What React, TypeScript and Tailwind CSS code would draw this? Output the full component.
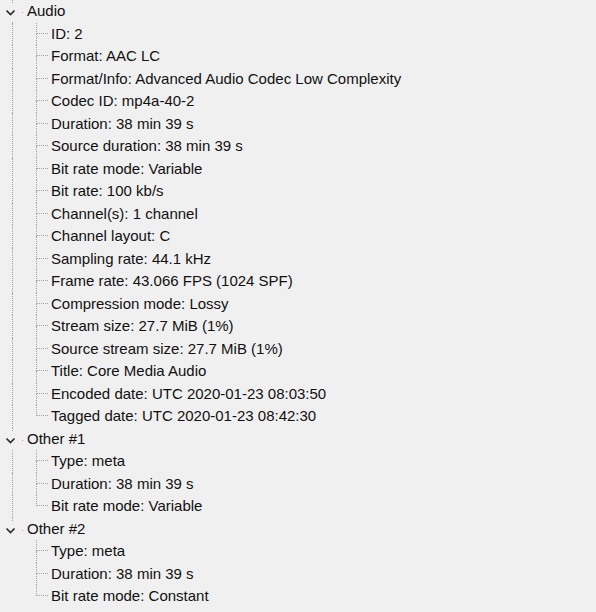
const audio = [
  "ID: 2",
  "Format: AAC LC",
  "Format/Info: Advanced Audio Codec Low Complexity",
  "Codec ID: mp4a-40-2",
  "Duration: 38 min 39 s",
  "Source duration: 38 min 39 s",
  "Bit rate mode: Variable",
  "Bit rate: 100 kb/s",
  "Channel(s): 1 channel",
  "Channel layout: C",
  "Sampling rate: 44.1 kHz",
  "Frame rate: 43.066 FPS (1024 SPF)",
  "Compression mode: Lossy",
  "Stream size: 27.7 MiB (1%)",
  "Source stream size: 27.7 MiB (1%)",
  "Title: Core Media Audio",
  "Encoded date: UTC 2020-01-23 08:03:50",
  "Tagged date: UTC 2020-01-23 08:42:30",
];

const groups = [
  { title: "Audio", items: audio },
  {
    title: "Other #1",
    items: ["Type: meta", "Duration: 38 min 39 s", "Bit rate mode: Variable"],
  },
  {
    title: "Other #2",
    items: ["Type: meta", "Duration: 38 min 39 s", "Bit rate mode: Constant"],
  },
];

const line = "border-dotted border-[#a3a3a3]";

function GroupRow({ title, last }: { title: string; last: boolean }) {
  return (
    <div className="flex h-[22.5px] items-stretch">
      <div className="flex w-6 shrink-0 flex-col">
        <div className={`ml-3 h-[3px] border-l ${line}`} />
        <svg width="24" height="19" viewBox="0 0 24 19" className="shrink-0">
          <polyline
            points="6.5,7.5 10.5,11.5 14.5,7.5"
            fill="none"
            stroke="#2e2e2e"
            strokeWidth="1.7"
          />
          <rect x="22" y="9" width="1" height="1" fill="#a3a3a3" />
        </svg>
        {!last && <div className={`ml-3 flex-1 border-l ${line}`} />}
      </div>
      <span className="pl-[3px] leading-[22.5px]">{title}</span>
    </div>
  );
}

function ItemRow({
  text,
  lastItem,
  lastGroup,
}: {
  text: string;
  lastItem: boolean;
  lastGroup: boolean;
}) {
  return (
    <div className="flex h-[22.5px] items-stretch">
      <div className="w-6 shrink-0">
        {!lastGroup && <div className={`ml-3 h-full border-l ${line}`} />}
      </div>
      <div className="flex w-6 shrink-0 flex-col">
        <div className={`ml-3 h-1/2 border-b border-l ${line}`} />
        {!lastItem && <div className={`ml-3 flex-1 border-l ${line}`} />}
      </div>
      <span className="pl-[3px] leading-[22.5px]">{text}</span>
    </div>
  );
}

export default function App() {
  return (
    <main className="min-h-screen w-full bg-[#f0f0f0] font-['Liberation_Sans',Arial,sans-serif] text-[15px] text-[#111111]">
      {groups.map((g, gi) => {
        const lastGroup = gi === groups.length - 1;
        return (
          <section key={g.title}>
            <GroupRow title={g.title} last={lastGroup} />
            {g.items.map((t, i) => (
              <ItemRow
                key={t}
                text={t}
                lastItem={i === g.items.length - 1}
                lastGroup={lastGroup}
              />
            ))}
          </section>
        );
      })}
    </main>
  );
}
